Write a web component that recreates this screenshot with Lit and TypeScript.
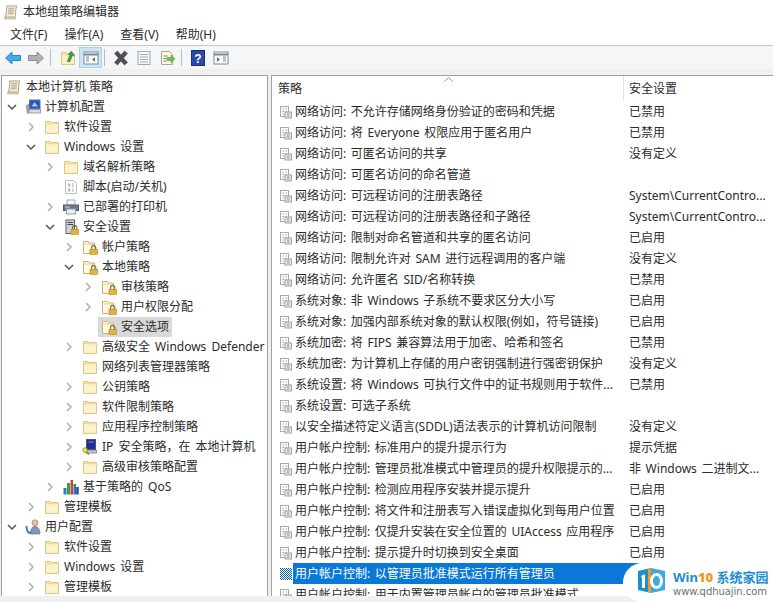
import { LitElement, html, css, svg } from "lit";
import { customElement } from "lit/decorators.js";

const folder = svg`<path d="M1.500 3.500v-1h5l1 1h7v11h-13z" fill="#fbe6a6" stroke="#dcc88f"/><path d="M2.200 5.500h11.600v8.300H2.200z" fill="#fdf2cc"/><path d="M2.200 4.500h11.600" stroke="#f3d98c"/>`;
const lock = svg`<path d="M9.600 10.500V8.500a2.100 2.100 0 0 1 4.200 0v2" fill="none" stroke="#77684a" stroke-width="1.100"/><rect x="8" y="10.300" width="7.500" height="5" fill="#e6b42e" stroke="#a8842a" stroke-width=".6"/>`;
const lockFolder = svg`<path d="M1.500 2.500h5l1 1.500h5v10.500h-11z" fill="#fff8e2" stroke="#c9b27a"/><path d="M2.500 5h9" stroke="#e9cf88"/>`;
const icons: Record<string, unknown> = {
  folder,
  lockfolder: svg`${lockFolder}${lock}`,
  doc: svg`<path d="M4 1.500h10.500c-1 3-1 8-1.500 12H2.500c1-3 1.500-8 1.500-12z" fill="#f7f0dc" stroke="#a89d80"/><path d="M1.500 13.500h11l1 2h-11.500z" fill="#e2d8bb" stroke="#a89d80" stroke-width=".6"/><path d="M5.700 4h6.300M5.500 6h6.300M5.300 8h6.300M5 10h6.300" stroke="#8f8873" stroke-width=".8"/>`,
  pc: svg`<path d="M1 7l3-2 1 8-2.500 1.500z" fill="#9aa6b6" stroke="#6e7a8a" stroke-width=".5"/><rect x="4.500" y="1" width="10.500" height="8.500" fill="#1f55c0" stroke="#6a7487"/><path d="M6.500 7.500l3-4.500 3.500 4.500z" fill="#a9cdf2"/><rect x="4" y="10.500" width="11.500" height="3.500" fill="#d4dae3" stroke="#76808f" stroke-width=".7"/>`,
  script: svg`<path d="M2.500 1.500h8l3 3v10h-11z" fill="#fff" stroke="#bcc0c6"/><path d="M5 5h1.500l.5 1-.5 1H5M9 5h1.500M9 7h1.500M5 10h1.500l.5 1-.5 1H5M9 10h1.500M9 12h1.500" stroke="#79828f" fill="none" stroke-width=".8"/>`,
  printer: svg`<rect x="4" y="1" width="8" height="5" fill="#fdfdfd" stroke="#a4abb4"/><rect x="0.500" y="6" width="15" height="5.500" fill="#6d7682" stroke="#565e69"/><rect x="3.500" y="10" width="9" height="5" fill="#e4eff7" stroke="#8aa3b5"/><path d="M2 8h5" stroke="#d6dade"/>`,
  secure: svg`<rect x="3" y="1" width="8.500" height="13.500" fill="#cfd4db" stroke="#5b6370"/><path d="M4.500 3.500h5.500M4.500 5.500h5.500" stroke="#3d4551"/>${lock}`,
  ipsec: svg`<rect x="4.500" y="0.500" width="9" height="10" fill="#1e2f9c" stroke="#4c5668"/><path d="M6.500 3h5" stroke="#7f8fd8"/><rect x="4" y="11" width="10.500" height="3" fill="#c6ccd5" stroke="#5f6a7a" stroke-width=".7"/><circle cx="3" cy="11" r="2.300" fill="#f4e552" stroke="#8d7f14" stroke-width=".7"/><path d="M4.500 13l2.500 2.500" stroke="#8d7f14" stroke-width="1.300"/>`,
  chart: svg`<rect x="0.500" y="9" width="3" height="6.500" fill="#2a7fd0"/><rect x="4" y="4" width="3" height="11.500" fill="#3f9f3f"/><rect x="7.500" y="1" width="2.500" height="14.500" fill="#c9472f"/><rect x="10.500" y="5" width="2.500" height="10.500" fill="#2a72c4"/><rect x="13.200" y="8" width="2.500" height="7.500" fill="#1d4d9e"/>`,
  user: svg`<circle cx="10" cy="3.800" r="3" fill="#e8c09a" stroke="#8a7058" stroke-width=".6"/><path d="M5.500 15c0-5 1.500-7.500 4.500-7.500s5 2.500 5 7.500z" fill="#8297b2" stroke="#5c6b80" stroke-width=".6"/><path d="M1.500 7c0 3 1 6 3 7l2-1" fill="none" stroke="#2d8acb" stroke-width="2"/>`,
};

const policy = svg`<rect x="1.500" y="1.500" width="8" height="10" fill="#fff" stroke="#a9a9a9"/><path d="M3.500 4h1.500M3.500 6.500h1.500M3.500 9h1.500M6.500 4h1.500M6.500 6.500h1.500" stroke="#a0a0a0"/><rect x="6" y="7" width="6.500" height="6" fill="#e6e8ea" stroke="#a2a2a2"/><path d="M8 9h2.500M8 11h2.500" stroke="#909090"/>`;

type Node = [number, string, string, "o" | "c" | "", boolean?];
const tree: Node[] = [
  [0, "pc", "计算机配置", "o"],
  [1, "folder", "软件设置", "c"],
  [1, "folder", "Windows 设置", "o"],
  [2, "folder", "域名解析策略", "c"],
  [2, "script", "脚本(启动/关机)", ""],
  [2, "printer", "已部署的打印机", "c"],
  [2, "secure", "安全设置", "o"],
  [3, "lockfolder", "帐户策略", "c"],
  [3, "lockfolder", "本地策略", "o"],
  [4, "lockfolder", "审核策略", "c"],
  [4, "lockfolder", "用户权限分配", "c"],
  [4, "lockfolder", "安全选项", "", true],
  [3, "folder", "高级安全 Windows Defender 防火墙", "c"],
  [3, "folder", "网络列表管理器策略", ""],
  [3, "folder", "公钥策略", "c"],
  [3, "folder", "软件限制策略", "c"],
  [3, "folder", "应用程序控制策略", "c"],
  [3, "ipsec", "IP 安全策略，在 本地计算机", "c"],
  [3, "folder", "高级审核策略配置", "c"],
  [2, "chart", "基于策略的 QoS", "c"],
  [1, "folder", "管理模板", "c"],
  [0, "user", "用户配置", "o"],
  [1, "folder", "软件设置", "c"],
  [1, "folder", "Windows 设置", "c"],
  [1, "folder", "管理模板", "c"],
];

const S = "System\\CurrentContro...";
const rows: [string, string][] = [
  ["网络访问: 不允许存储网络身份验证的密码和凭据", "已禁用"],
  ["网络访问: 将 Everyone 权限应用于匿名用户", "已禁用"],
  ["网络访问: 可匿名访问的共享", "没有定义"],
  ["网络访问: 可匿名访问的命名管道", ""],
  ["网络访问: 可远程访问的注册表路径", S],
  ["网络访问: 可远程访问的注册表路径和子路径", S],
  ["网络访问: 限制对命名管道和共享的匿名访问", "已启用"],
  ["网络访问: 限制允许对 SAM 进行远程调用的客户端", "没有定义"],
  ["网络访问: 允许匿名 SID/名称转换", "已禁用"],
  ["系统对象: 非 Windows 子系统不要求区分大小写", "已启用"],
  ["系统对象: 加强内部系统对象的默认权限(例如，符号链接)", "已启用"],
  ["系统加密: 将 FIPS 兼容算法用于加密、哈希和签名", "已禁用"],
  ["系统加密: 为计算机上存储的用户密钥强制进行强密钥保护", "没有定义"],
  ["系统设置: 将 Windows 可执行文件中的证书规则用于软件...", "已禁用"],
  ["系统设置: 可选子系统", ""],
  ["以安全描述符定义语言(SDDL)语法表示的计算机访问限制", "没有定义"],
  ["用户帐户控制: 标准用户的提升提示行为", "提示凭据"],
  ["用户帐户控制: 管理员批准模式中管理员的提升权限提示的...", "非 Windows 二进制文..."],
  ["用户帐户控制: 检测应用程序安装并提示提升", "已启用"],
  ["用户帐户控制: 将文件和注册表写入错误虚拟化到每用户位置", "已启用"],
  ["用户帐户控制: 仅提升安装在安全位置的 UIAccess 应用程序", "已启用"],
  ["用户帐户控制: 提示提升时切换到安全桌面", "已启用"],
  ["用户帐户控制: 以管理员批准模式运行所有管理员", "已启用"],
  ["用户帐户控制: 用于内置管理员帐户的管理员批准模式", "已禁用"],
];

@customElement("app-root")
export class AppRoot extends LitElement {
  static styles = css`
    :host { display: block; width: 773px; height: 602px; overflow: hidden; position: relative; background: #f0f0f0; color: #2b2b2b;
      font: 12px/16px "Noto Sans", "Noto Sans CJK SC", sans-serif; }
    .title { height: 23px; background: #fff; display: flex; align-items: center; gap: 5px; padding: 0 0 0 3px; box-sizing: border-box; }
    .title svg { width: 15px; height: 16px; }
    .menu { background: #fff; display: flex; align-items: center; gap: 17px; padding: 1px 0 0 10px; box-sizing: border-box; border-bottom: 1px solid #c8c8c8; height: 23px; }
    .toolbar { height: 23px; background: #f5f6f7; display: flex; align-items: center; padding-left: 5px; }
    .tb { width: 16px; height: 16px; display: block; flex: none; }
    .m3 { margin-left: 3px; } .m7 { margin-left: 7px; } .m8 { margin-left: 8px; } .m9 { margin-left: 9px; } .m6 { margin-left: 6px; } .m2 { margin-left: 2px; }
    .sep { width: 1px; height: 17px; background: #b9bdc2; flex: none; }
    .pressed { width: 23px; height: 21px; background: #cde4f5; border: 1px solid #a9d0ec; display: flex; align-items: center; justify-content: center; box-sizing: border-box; flex: none; }
    .panes { display: flex; height: 527px; padding: 6px 0 0 1px; gap: 3px; box-sizing: border-box; }
    .pane { background: #fff; border: 1px solid #a0a0a0; border-bottom: none; box-sizing: border-box; overflow: hidden; }
    .left { width: 267px; flex: none; padding-top: 1px; }
    .right { flex: 1; border-right: none; min-width: 0; }
    .trow { height: 20px; display: flex; align-items: center; white-space: nowrap; }
    .root { padding-left: 4px; gap: 5px; }
    .root svg { width: 15px; height: 16px; }
    .chev { width: 10px; height: 10px; flex: none; margin-right: 8px; }
    .chev path { fill: none; stroke-width: 1.5; }
    .ticon { width: 16px; height: 16px; flex: none; margin-right: 3px; }
    .tlabel { padding: 2px 1px; line-height: 16px; word-spacing: 2px; }
    .selected { background: #d9d9d9; margin-left: -22px; padding: 2px 3px 2px 23px; }
    .sel-icon { position: relative; z-index: 1; }
    .head { height: 25px; display: grid; grid-template-columns: 351px 1fr; position: relative; }
    .head div { padding: 5px 0 0 6px; height: 25px; box-sizing: border-box; }
    .head div + div { border-left: 1px solid #e3e3e3; padding-left: 5px; }
    .sort { position: absolute; left: 172px; top: 1px; width: 9px; height: 5px; padding: 0; }
    .row { height: 21px; display: grid; grid-template-columns: 351px 1fr; align-items: center; white-space: nowrap; word-spacing: 1.5px; }
    .c1 { display: flex; align-items: center; height: 21px; padding-left: 7px; }
    .c1 svg { width: 14px; height: 14px; flex: none; }
    .c2 { padding-left: 6px; height: 21px; line-height: 21px; }
    .lbl { height: 21px; line-height: 21px; padding-left: 2px; flex: 1; overflow: hidden; }
    .row.on .lbl, .row.on .c2 { background: #0a78d7; color: #fff; }
    .watermark { position: absolute; left: 623px; top: 563px; width: 150px; height: 39px; background: #fff; border-radius: 20px 0 0 20px; display: flex; gap: 8px; padding: 4px 0 0 15px; box-sizing: border-box; }
    .logo { width: 27px; height: 27px; flex: none; }
    .wm1 { font: 700 13px/15px "Noto Sans", "Noto Sans CJK SC", sans-serif; color: #1f8ed0; white-space: nowrap; margin-top: 3px; }
    .wm1 b { color: #f09a1f; }
    .wm2 { font: 10px/12px "DejaVu Sans", sans-serif; color: #66737b; letter-spacing: -.05px; margin-top: 1px; white-space: nowrap; }
  `;

  render() {
    return html`
      <div class="title"><svg viewBox="0 0 16 16">${icons.doc}</svg><span>本地组策略编辑器</span></div>
      <div class="menu"><span>文件(F)</span><span>操作(A)</span><span>查看(V)</span><span>帮助(H)</span></div>
      <div class="toolbar">
        <svg class="tb" viewBox="0 0 16 16"><path d="M.5 8l6.500-6v3.500h8.500v5H7V14z" fill="#45aaea" stroke="#2a88c8"/></svg>
        <svg class="tb m7" viewBox="0 0 16 16"><path d="M15.500 8L9 2v3.500H.5v5H9V14z" fill="#b0b0b0" stroke="#8f8f8f"/></svg>
        <span class="sep m6"></span>
        <svg class="tb m9" viewBox="0 0 16 16">${folder}<path d="M11.500 1l3 5-2-.3-2.500 6H7l2.800-6.800L8 4.500z" fill="#3f9c3f" stroke="#2d7d2d" stroke-width=".4"/></svg>
        <span class="pressed m3">
          <svg class="tb" viewBox="0 0 16 16"><rect x="1" y="2" width="14" height="12" fill="#fff" stroke="#7a8794"/><path d="M1 4.500h14" stroke="#7a8794" stroke-width="2"/><path d="M3 7h3M3 9h3M3 11h3" stroke="#7a8794"/><path d="M12 7l-3 2.500 3 2.500z" fill="#3d9a3d"/></svg>
        </span>
        <span class="sep m2"></span>
        <svg class="tb m8" viewBox="0 0 16 16"><path d="M1.500 3.500l3-2.500 3.500 4 3.500-4 3 2.500-4 4.500 4 4.500-3 2.500-3.500-4-3.500 4-3-2.500 4-4.500z" fill="#4c5157" stroke="#33373b" stroke-width=".5"/></svg>
        <svg class="tb m7" viewBox="0 0 16 16"><rect x="2" y="1.500" width="12" height="13" fill="#f4f6f8" stroke="#a2aab2"/><path d="M4 4.500h8M4 7h8M4 9.500h8M4 12h8" stroke="#a2aab2"/></svg>
        <svg class="tb m7" viewBox="0 0 16 16"><path d="M2.500 1.500h8l3 3V14.500h-11z" fill="#fbf7e6" stroke="#a9a58c"/><path d="M4.500 6h4M4.500 8.500h3M4.500 11h3" stroke="#7a7a6a"/><path d="M8 7.500h4V5l4 4-4 4v-2.500H8z" fill="#6cc04a" stroke="#4d9432" stroke-width=".5"/></svg>
        <span class="sep m6"></span>
        <svg class="tb m8" viewBox="0 0 16 16"><rect x="1.500" y="0.500" width="13" height="15" fill="#2a49a8" stroke="#1c2f75"/><text x="8" y="13" text-anchor="middle" font-size="12" font-weight="700" fill="#fff" font-family="Liberation Sans">?</text></svg>
        <svg class="tb m7" viewBox="0 0 16 16"><rect x="1" y="2" width="14" height="12" fill="#fff" stroke="#7a8794"/><path d="M1 4.500h14" stroke="#7a8794" stroke-width="2"/><path d="M10 7h3M10 9h3M10 11h3" stroke="#7a8794"/><path d="M4 7l3 2.500-3 2.500z" fill="#3d9a3d"/></svg>
      </div>
      <div class="panes">
        <div class="pane left">
          <div class="trow root"><svg viewBox="0 0 16 16">${icons.doc}</svg><span>本地计算机 策略</span></div>
          ${tree.map(([lvl, ic, label, st, sel]) => html`
            <div class="trow" style="padding-left:${5 + lvl * 19}px">
              <svg class="chev" viewBox="0 0 10 10">
                ${st === "o" ? svg`<path d="M1 3l4 4 4-4" stroke="#555"/>` : st === "c" ? svg`<path d="M3 1l4 4-4 4" stroke="#b0b0b0"/>` : ""}
              </svg>
              <svg class="ticon ${sel ? "sel-icon" : ""}" viewBox="0 0 16 16">${icons[ic]}</svg>
              <span class="tlabel ${sel ? "selected" : ""}">${label}</span>
            </div>`)}
        </div>
        <div class="pane right">
          <div class="head">
            <div>策略</div><div>安全设置</div>
            <svg class="sort" viewBox="0 0 9 5"><path d="M.5 4.500L4.500.5l4 4" fill="none" stroke="#9a9a9a"/></svg>
          </div>
          ${rows.map(([p, v], i) => html`
            <div class="row ${i === 22 ? "on" : ""}">
              <div class="c1">
                <svg viewBox="0 0 14 14">${i === 22 ? svg`<defs><pattern id="dith" width="2" height="2" patternUnits="userSpaceOnUse"><rect width="2" height="2" fill="#fff"/><rect width="1" height="1" fill="#0a5fb0"/><rect x="1" y="1" width="1" height="1" fill="#0a5fb0"/></pattern></defs><rect x="1" y="1" width="12" height="12" fill="url(#dith)"/>` : policy}</svg>
                <span class="lbl">${p}</span>
              </div>
              <div class="c2">${v}</div>
            </div>`)}
        </div>
      </div>
      <div class="watermark">
        <svg class="logo" viewBox="0 0 27 27">
          <path d="M0 4l13-3v25L0 23z" fill="#1f8ed0"/><path d="M13 1l14 3v19l-14 3z" fill="#3aa8e2"/><path d="M13 1v25l-3-1V2z" fill="#f09a1f"/>
          <path d="M3 9l4-2v14H4V11z" fill="#fff"/><ellipse cx="18.500" cy="14" rx="5" ry="6.500" fill="none" stroke="#fff" stroke-width="3"/>
        </svg>
        <div><div class="wm1">Win<b>10</b> 系统家园</div><div class="wm2">www.qdhuajin.com</div></div>
      </div>
    `;
  }
}
